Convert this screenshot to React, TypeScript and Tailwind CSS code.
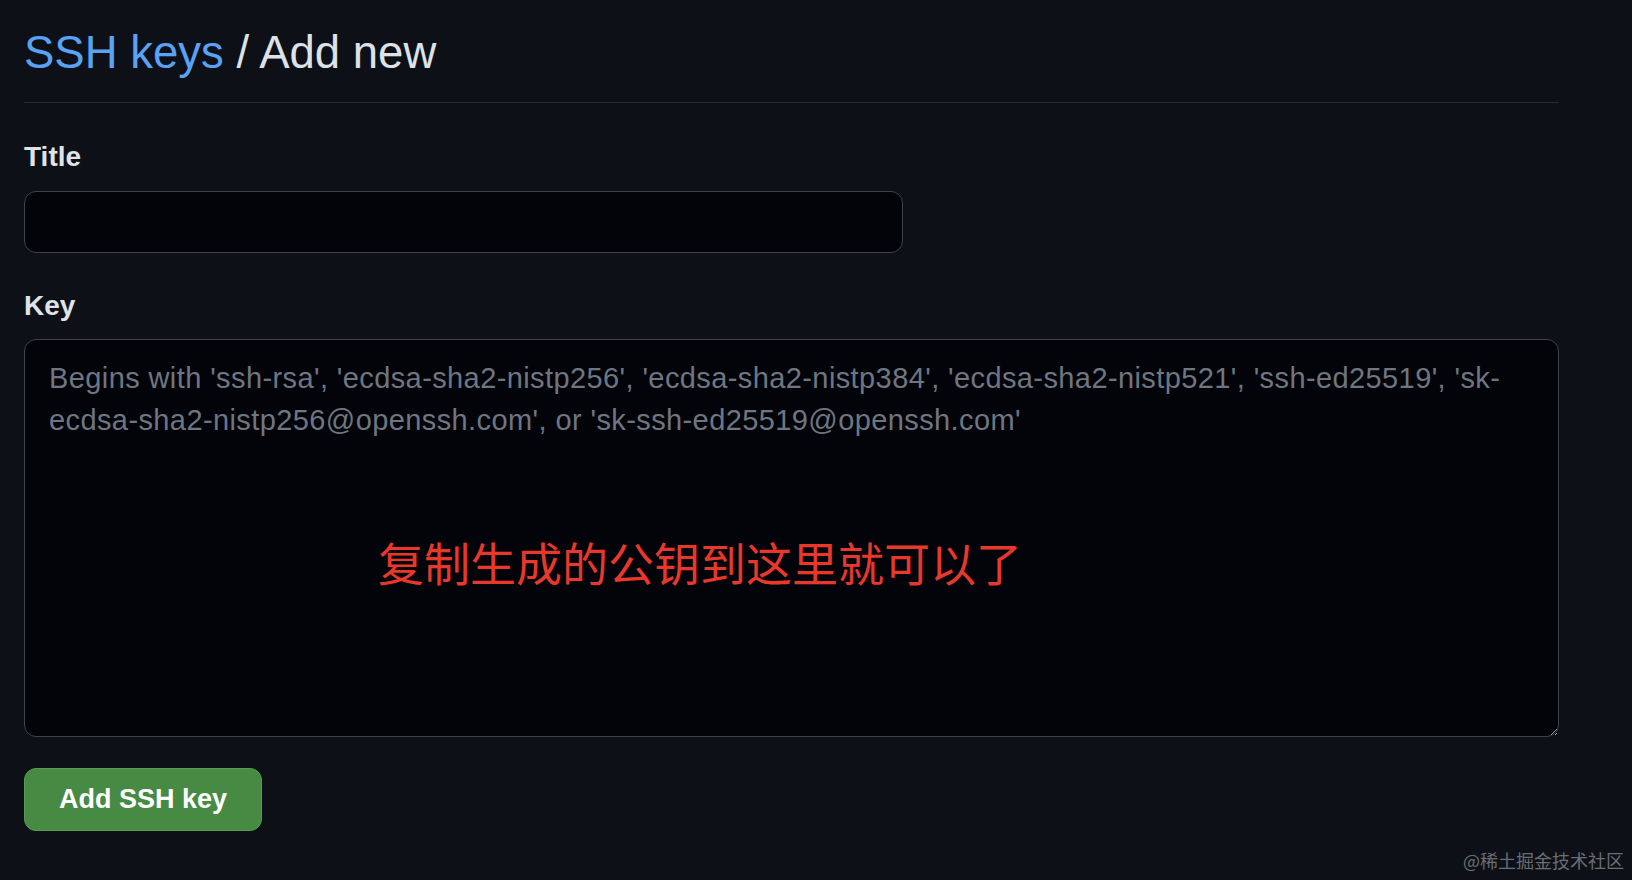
import { useState } from "react"

const PLACEHOLDER =
  "Begins with 'ssh-rsa', 'ecdsa-sha2-nistp256', 'ecdsa-sha2-nistp384', 'ecdsa-sha2-nistp521', 'ssh-ed25519', 'sk-\necdsa-sha2-nistp256@openssh.com', or 'sk-ssh-ed25519@openssh.com'"

export default function App() {
  const [title, setTitle] = useState("")
  const [key, setKey] = useState("")

  return (
    <div className="relative min-h-[880px] w-full bg-[#0d1117] font-['Liberation_Sans',Arial,sans-serif] overflow-hidden">
      <div className="pl-[24px] w-[1559px]">
        {/* Subhead */}
        <div className="pt-[30px] pb-[27px] border-b border-[#262c34]">
          <h2 className="text-[45.5px] leading-[45px] font-normal text-[#dde2e7]">
            <a href="#" className="text-[#5aa2f5]">
              SSH keys
            </a>{" "}
            / Add new
          </h2>
        </div>

        <form className="flex flex-col" onSubmit={(e) => e.preventDefault()}>
          {/* Title */}
          <label htmlFor="ssh-title" className="mt-[40px] text-[28px] leading-[28px] font-bold text-[#dfe3e8]">
            Title
          </label>
          <input
            id="ssh-title"
            value={title}
            onChange={(e) => setTitle(e.target.value)}
            className="mt-[20px] w-[879px] h-[62px] rounded-[12px] border border-[#3d444d] bg-[#02040a] px-[24px] text-[27px] text-[#e6edf3] outline-none"
          />

          {/* Key */}
          <label htmlFor="ssh-key" className="mt-[39px] text-[28px] leading-[28px] font-bold text-[#dfe3e8]">
            Key
          </label>
          <div className="relative mt-[19px]">
            <textarea
              id="ssh-key"
              value={key}
              onChange={(e) => setKey(e.target.value)}
              placeholder={PLACEHOLDER}
              className="block w-full h-[398px] rounded-[12px] border border-[#3d444d] bg-[#02040a] px-[24px] pt-[17px] text-[29px] tracking-[0.4px] leading-[42px] text-[#e6edf3] placeholder:text-[#6e7681] outline-none [color-scheme:dark]"
            />
            {/* annotation */}
            <span className="pointer-events-none absolute left-[354px] top-[199px] text-[46px] leading-none text-[#e8382b] font-['Noto_Sans_CJK_SC',sans-serif]">
              复制生成的公钥到这里就可以了
            </span>
          </div>

          <div className="mt-[31px]">
            <button
              type="submit"
              className="w-[238px] h-[63px] rounded-[12px] bg-[#468a44] border border-[#5a9a57] text-white text-[27px] font-bold flex items-center justify-center"
            >
              Add SSH key
            </button>
          </div>
        </form>
      </div>

      <span className="absolute right-[8px] bottom-[11px] text-[18px] leading-none text-[#6a6d72] font-['Noto_Sans_CJK_SC',sans-serif]">
        @稀土掘金技术社区
      </span>
    </div>
  )
}
